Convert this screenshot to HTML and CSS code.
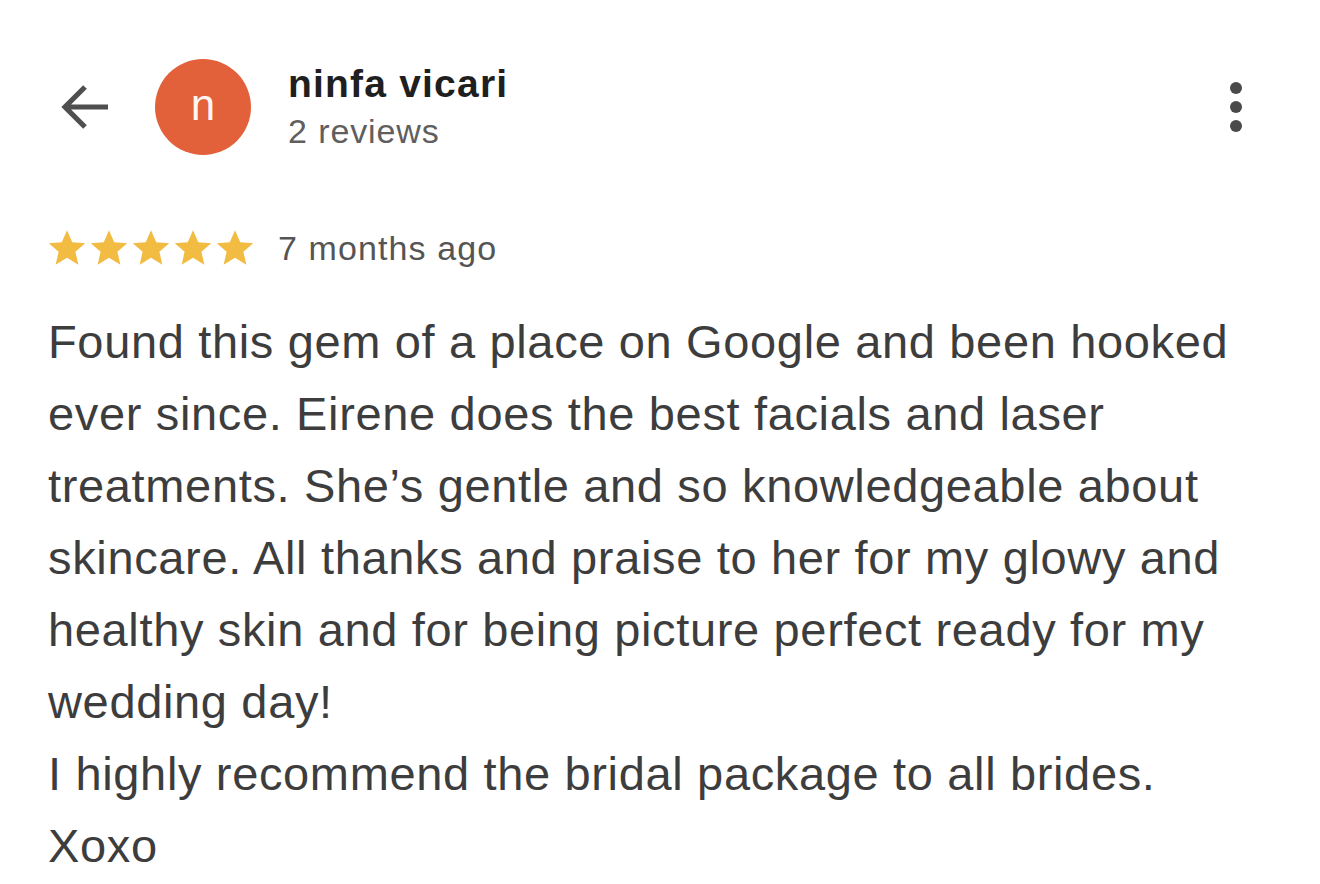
FILE: index.html
```html
<!DOCTYPE html>
<html>
<head>
<meta charset="utf-8">
<link rel="stylesheet" href="styles.css">
</head>
<body>
<div class="page">
  <header class="header">
    <svg class="back" viewBox="0 0 48 48" width="48" height="48"><path d="M48 24H5M25 4L5 24l20 20" fill="none" stroke="#4f4f4f" stroke-width="5.2"/></svg>
    <div class="avatar">n</div>
    <div class="who">
      <div class="name">ninfa vicari</div>
      <div class="count">2 reviews</div>
    </div>
    <div class="kebab"><span></span><span></span><span></span></div>
  </header>
  <div class="meta">
    <div class="stars">
      <svg viewBox="0 0 24 24"><path d="M12 1.8l3 6.9 7.4.6-5.6 4.9 1.7 7.3L12 17.6l-6.5 3.9 1.7-7.3-5.6-4.9 7.4-.6z"/></svg>
      <svg viewBox="0 0 24 24"><path d="M12 1.8l3 6.9 7.4.6-5.6 4.9 1.7 7.3L12 17.6l-6.5 3.9 1.7-7.3-5.6-4.9 7.4-.6z"/></svg>
      <svg viewBox="0 0 24 24"><path d="M12 1.8l3 6.9 7.4.6-5.6 4.9 1.7 7.3L12 17.6l-6.5 3.9 1.7-7.3-5.6-4.9 7.4-.6z"/></svg>
      <svg viewBox="0 0 24 24"><path d="M12 1.8l3 6.9 7.4.6-5.6 4.9 1.7 7.3L12 17.6l-6.5 3.9 1.7-7.3-5.6-4.9 7.4-.6z"/></svg>
      <svg viewBox="0 0 24 24"><path d="M12 1.8l3 6.9 7.4.6-5.6 4.9 1.7 7.3L12 17.6l-6.5 3.9 1.7-7.3-5.6-4.9 7.4-.6z"/></svg>
    </div>
    <span class="ago">7 months ago</span>
  </div>
  <p class="body">Found this gem of a place on Google and been hooked<br>ever since. Eirene does the best facials and laser<br>treatments. She’s gentle and so knowledgeable about<br>skincare. All thanks and praise to her for my glowy and<br>healthy skin and for being picture perfect ready for my<br>wedding day!<br>I highly recommend the bridal package to all brides.<br>Xoxo</p>
</div>
</body>
</html>
```

FILE: styles.css
```css
html, body { margin: 0; padding: 0; background: #fff; }
body { font-family: "Liberation Sans", Arial, sans-serif; }
.page { padding: 58px 0 0 48px; width: 1272px; }
.header { display: flex; align-items: center; height: 98px; }
.back { margin-left: 12px; width: 48px; height: 48px; }
.avatar {
  margin-left: 47px; width: 96px; height: 96px; border-radius: 50%;
  background: #e2603a; color: #fff6f2; display: flex; align-items: center; justify-content: center;
  font-size: 44px; line-height: 1; padding-bottom: 4px; box-sizing: border-box;
}
.who { margin-left: 37px; display: flex; flex-direction: column; margin-top: -2px; }
.name { font-weight: bold; font-size: 39px; letter-spacing: 1.2px; color: #1f1f1f; line-height: 44px; }
.count { font-size: 34px; letter-spacing: 0.9px; color: #5f5f5f; line-height: 38px; margin-top: 6px; }
.kebab { margin-left: auto; margin-right: 78px; display: flex; flex-direction: column; gap: 7px; margin-top: 0; }
.kebab span { width: 12px; height: 12px; border-radius: 50%; background: #4a4a4a; display: block; }
.meta { display: flex; align-items: center; margin-top: 72px; height: 40px; }
.stars { display: flex; gap: 0; margin-left: -2px; }
.stars svg { width: 42px; height: 42px; fill: #f2bb42; }
.ago { margin-left: 22px; font-size: 34px; letter-spacing: 1.1px; color: #555; }
.body { margin: 38px 0 0 0; font-size: 47px; letter-spacing: 0.65px; line-height: 72px; color: #3d3d3d; }
```
